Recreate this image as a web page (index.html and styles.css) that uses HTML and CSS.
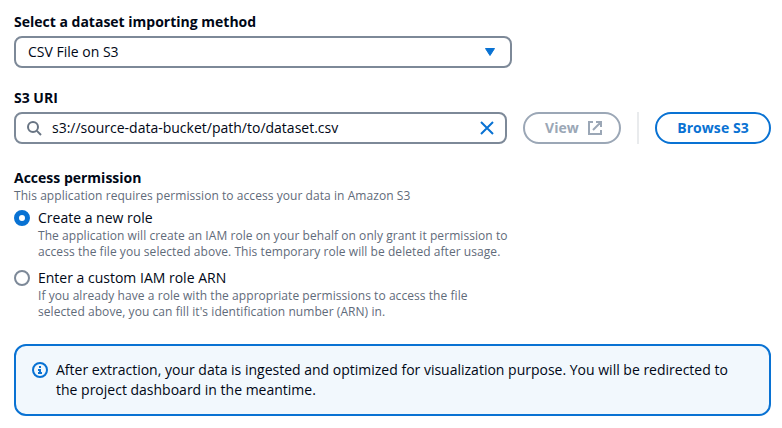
FILE: index.html
```html
<!DOCTYPE html>
<html lang="en">
<head>
<meta charset="utf-8">
<title>Import dataset</title>
<link rel="stylesheet" href="styles.css">
</head>
<body>
<main class="form">
  <section class="field">
    <div class="label">Select a dataset importing method</div>
    <div class="control select"><span>CSV File on S3</span>
      <svg class="caret" width="16" height="16" viewBox="0 0 16 16"><path d="M3.5 4.5h9L8 11.5z" fill="#0972d3" stroke="#0972d3"/></svg>
    </div>
  </section>
  <section class="field uri-field">
    <div class="label">S3 URI</div>
    <div class="uri-row">
      <div class="control search">
        <svg class="icon" width="16" height="16" viewBox="0 0 16 16" fill="none" stroke="#687483" stroke-width="2"><circle cx="7" cy="7" r="5"/><path d="m10.9 10.9 4.1 4.1"/></svg>
        <span class="value">s3://source-data-bucket/path/to/dataset.csv</span>
        <svg width="16" height="16" viewBox="0 0 16 16" fill="none" stroke="#0972d3" stroke-width="2"><path d="m2 2 12 12M14 2 2 14"/></svg>
      </div>
      <button class="button view" disabled>View
        <svg width="16" height="16" viewBox="0 0 16 16" fill="none" stroke="#9ba7b6" stroke-width="2"><path d="M9 2h5v5M6 10l8-8M14 10v4H2V2h4"/></svg>
      </button>
      <div class="divider"></div>
      <button class="button browse">Browse S3</button>
    </div>
  </section>
  <section class="permission">
    <div class="label">Access permission</div>
    <div class="description">This application requires permission to access your data in Amazon S3</div>
    <div class="option">
      <span class="radio checked"></span>
      <div><div class="option-title">Create a new role</div>
      <div class="description">The application will create an IAM role on your behalf on only grant it permission to<br>access the file you selected above. This temporary role will be deleted after usage.</div></div>
    </div>
    <div class="option second">
      <span class="radio"></span>
      <div><div class="option-title">Enter a custom IAM role ARN</div>
      <div class="description">If you already have a role with the appropriate permissions to access the file<br>selected above, you can fill it's identification number (ARN) in.</div></div>
    </div>
  </section>
  <aside class="alert">
    <svg class="info" width="16" height="16" viewBox="0 0 16 16" fill="none" stroke="#0972d3" stroke-width="2"><circle cx="8" cy="8" r="7"/><path d="M8 11V8H6M10 11H6M8 6V4"/></svg>
    <p>After extraction, your data is ingested and optimized for visualization purpose. You will be redirected to<br>the project dashboard in the meantime.</p>
  </aside>
</main>
</body>
</html>
```
FILE: styles.css
```css
* { box-sizing: border-box; }
body {
  margin: 0;
  background: #fff;
  color: #000716;
  font: 14px/20px "Open Sans", sans-serif;
}
.form { width: 771px; padding: 12px 0 0 14px; }
.label { font-weight: 700; }
.control {
  display: flex;
  align-items: center;
  height: 32px;
  margin-top: 4px;
  border: 2px solid #7d8998;
  border-radius: 8px;
}
.select { width: 498px; padding: 0 12px; justify-content: space-between; }
svg { flex: none; }
.uri-field { margin-top: 20px; }
.uri-row { display: flex; align-items: center; }
.search { width: 493px; padding: 0 10px; }
.value { margin-left: 10px; flex: 1; }
.uri-row .control, .button { margin-top: 4px; }
.button {
  display: flex;
  align-items: center;
  justify-content: center;
  height: 32px;
  padding: 0;
  border: 2px solid;
  border-radius: 20px;
  background: #fff;
  font: 700 14px/20px "Open Sans", sans-serif;
  letter-spacing: 0.07px;
}
.view {
  width: 98px;
  margin-left: 16px;
  padding-left: 20px;
  justify-content: flex-start;
  gap: 8px;
  color: #9ba7b6;
}
.divider { width: 2px; height: 32px; margin: 4px 16px 0; background: #e9ebed; }
.browse { width: 116px; color: #0972d3; }
.permission { margin-top: 24px; }
.description { color: #5f6b7a; font-size: 12px; line-height: 16px; letter-spacing: 0.06px; }
.option { display: flex; margin-top: 4px; }
.second { margin-top: 8px; }
.radio {
  flex: none;
  width: 16px;
  height: 16px;
  margin: 2px 8px 0 0;
  border: 2px solid #7d8998;
  border-radius: 50%;
}
.checked { border: 5px solid #0972d3; }
.alert {
  display: flex;
  height: 72px;
  margin-top: 24px;
  padding: 14px 16px;
  border: 2px solid #0972d3;
  border-radius: 12px;
  background: #f2f8fd;
}
.info { margin: 2px 8px 0 0; }
.alert p { margin: 0; white-space: nowrap; }
```
